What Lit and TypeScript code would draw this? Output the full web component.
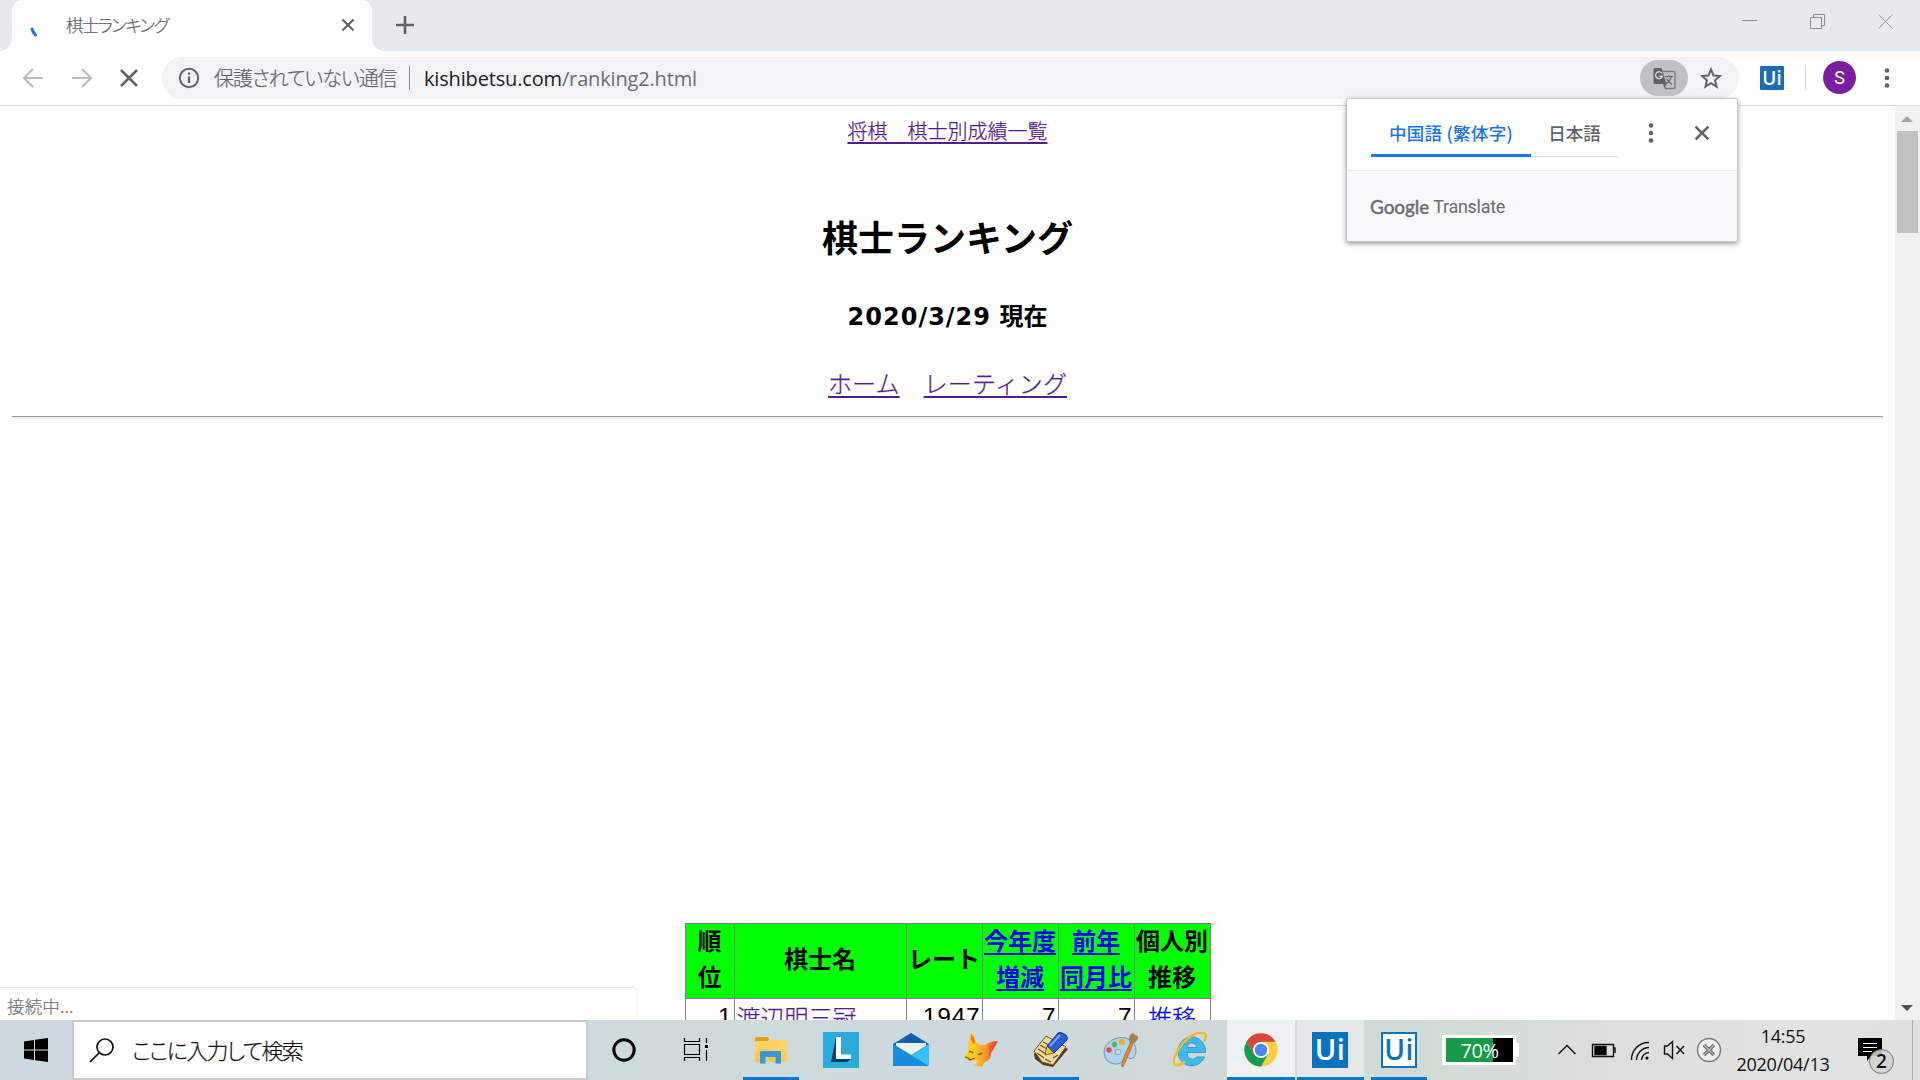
import { LitElement, html, css, svg } from "lit";
import { customElement } from "lit/decorators.js";

const closeGlyph = (w: number, sw: number) => html`
  <svg width=${w} height=${w} viewBox="0 0 20 20" fill="none" stroke="#5f6368" stroke-width=${sw}>
    <path d="M2 2L18 18M18 2L2 18" />
  </svg>`;

const kebab = html`
  <svg width="6" height="24" viewBox="0 0 6 24" fill="#5f6368">
    <circle cx="3" cy="4.500" r="2.300" /><circle cx="3" cy="12" r="2.300" /><circle cx="3" cy="19.500" r="2.300" />
  </svg>`;

@customElement("browser-tabs")
class BrowserTabs extends LitElement {
  static styles = css`
    :host { display: flex; height: 51px; background: #e7eaed; font-family: "Noto Sans CJK JP", sans-serif; }
    .tab { position: relative; display: flex; align-items: center; box-sizing: border-box; width: 360px; margin-left: 12px;
      background: #fff; border-radius: 11px 11px 0 0; padding: 0 17px 0 18px; }
    .tab::before, .tab::after { content: ""; position: absolute; bottom: 0; width: 12px; height: 12px; }
    .tab::before { left: -12px; background: radial-gradient(circle at 0 0, transparent 11.5px, #fff 12px); }
    .tab::after { right: -12px; background: radial-gradient(circle at 100% 0, transparent 11.5px, #fff 12px); }
    .spin { width: 36px; height: 20px; padding-top: 5px; }
    .title { flex: 1; padding-bottom: 2px; font-size: 17.5px; color: #5f6368; font-feature-settings: "palt"; letter-spacing: -1.6px; font-weight: 300; -webkit-text-stroke: .2px #5f6368; white-space: nowrap; }
    .tab > svg { margin-bottom: 1px; }
    .plus { margin: 15px 0 0 23px; }
    .win { margin: 14px 27px 0 auto; display: flex; gap: 53px; }
  `;
  render() {
    return html`
      <div class="tab">
        <div class="spin"><svg width="8" height="10" viewBox="0 0 8 10"><path d="M2 2Q3 5.500 5.500 8" stroke="#1a73e8" stroke-width="3" stroke-linecap="round" fill="none" /></svg></div>
        <div class="title">棋士ランキング</div>
        ${closeGlyph(14, 3)}
      </div>
      <svg class="plus" width="20" height="20" viewBox="0 0 20 20" stroke="#5f6368" stroke-width="2.6"><path d="M10 1V19M1 10H19" /></svg>
      <div class="win">
        <svg width="15" height="16" stroke="#8b8e91"><path d="M0 6.500H15" /></svg>
        <svg width="15" height="16" fill="none" stroke="#8b8e91"><path d="M.5 3.500H11.500V14.500H.5ZM3.500 3V.5H14.500V11.500H12" /></svg>
        <svg width="15" height="16" fill="none" stroke="#9a9da0"><path d="M.5 .5L14.500 14.500M14.500 .5L.5 14.500" /></svg>
      </div>`;
  }
}

@customElement("browser-toolbar")
class BrowserToolbar extends LitElement {
  static styles = css`
    :host { display: flex; align-items: center; box-sizing: border-box; height: 55px; padding-left: 22px; background: #fff;
      border-bottom: 1px solid #dadce0; font-family: "Open Sans", "Noto Sans CJK JP", sans-serif; }
    .nav { display: flex; align-items: center; gap: 26.5px; width: 140px; }
    .omni { display: flex; align-items: center; box-sizing: border-box; width: 1577px; height: 42px; border-radius: 21px; background: #f1f3f4; padding: 0 17px 0 16px; }
    .warn { margin-left: 14px; margin-top: -2px; width: 195px; font: 300 20px "Noto Sans CJK JP", sans-serif; color: #5f6368; font-feature-settings: "palt"; letter-spacing: -1.05px; -webkit-text-stroke: .2px #5f6368; white-space: nowrap; }
    .bar { width: 1px; height: 24px; background: #8c8f93; }
    .url { flex: 1; margin-left: 14px; font-size: 20px; letter-spacing: -.16px; color: #202124; white-space: nowrap; }
    .path { color: #6a6d71; }
    .tr { display: flex; align-items: center; justify-content: center; width: 48px; height: 36px; border-radius: 18px; background: #c1c1c3; margin-right: 12px; }
    .ui { display: flex; align-items: center; justify-content: center; width: 24px; height: 24px; margin-left: 21px; background: #1a6db3; color: #fff; font: 600 19px "Open Sans", sans-serif; border-radius: 1px; }
    .sep { width: 1px; height: 24px; background: #cfd1d4; margin: 0 17px 0 21px; }
    .avatar { display: flex; align-items: center; justify-content: center; width: 33px; height: 33px; border-radius: 50%; background: #7b1fa2; color: #fff; font: 18px Roboto, sans-serif; margin-right: 28px; margin-top: -1px; }
  `;
  render() {
    return html`
      <div class="nav">
        <svg width="22" height="20" viewBox="0 0 22 20" fill="none" stroke="#babcbe" stroke-width="2.2"><path d="M21 10H3M11 1L2 10L11 19" /></svg>
        <svg width="22" height="20" viewBox="0 0 22 20" fill="none" stroke="#babcbe" stroke-width="2.2"><path d="M1 10H19M11 1L20 10L11 19" /></svg>
        ${closeGlyph(20, 2.5)}
      </div>
      <div class="omni">
        <svg width="22" height="22" viewBox="0 0 22 22" fill="none" stroke="#5f6368" stroke-width="2"><circle cx="11" cy="11" r="9.200" /><path d="M11 9.500V16M11 5.500V7.800" stroke-width="2.300" /></svg>
        <div class="warn">保護されていない通信</div>
        <div class="bar"></div>
        <div class="url">kishibetsu.com<span class="path">/ranking2.html</span></div>
        <div class="tr">
          <svg width="23" height="23" viewBox="0 0 23 23">
            <path d="M9.500 4.500H20.500Q22 4.500 22 6V20Q22 21.500 20.500 21.500H12" fill="#c1c1c3" stroke="#7b7d80" stroke-width="1.400" />
            <path d="M2 1H8.500L13.500 17H2Q.5 17 .5 15.500V2.500Q.5 1 2 1Z" fill="#5f6368" /><path d="M10 17H13.500L11.500 21.500Z" fill="#5f6368" />
            <path d="M9 6.500A3.400 3.400 0 1 0 9.300 9.200H6.200" fill="none" stroke="#d5d7d9" stroke-width="1.400" />
            <path d="M12 9.500H20M15.700 8V9.500M18.500 9.500Q17 14 13 17M13.500 11.500Q15.500 15 19 17.500" fill="none" stroke="#5f6368" stroke-width="1.200" />
          </svg>
        </div>
        <svg width="22" height="22" viewBox="0 0 22 22" fill="none" stroke="#5f6368" stroke-width="2"><path d="M11 2.400L13.500 8.500L20 9L15 13.300L16.600 19.700L11 16.200L5.400 19.700L7 13.300L2 9L8.500 8.500Z" /></svg>
      </div>
      <div class="ui">Ui</div>
      <div class="sep"></div>
      <div class="avatar">S</div>
      ${kebab}`;
  }
}

@customElement("translate-popup")
class TranslatePopup extends LitElement {
  static styles = css`
    :host { display: block; width: 390px; height: 142px; background: #fff; border: 1px solid #c4c6c8; border-radius: 3px;
      box-shadow: 0 2px 5px rgba(0,0,0,.38); overflow: hidden; font-family: "Noto Sans CJK JP", sans-serif; }
    .top { display: flex; height: 72px; border-bottom: 1px solid #eceef0; box-sizing: border-box; padding-left: 24px; }
    .lang { box-sizing: border-box; height: 58px; padding-top: 21px; font-size: 17.5px; line-height: 25px; font-weight: 500; text-align: center; white-space: nowrap; color: #5f6368; border-bottom: 1px solid #dadce0; width: 87px; }
    .on { width: 160px; color: #1a73e8; border-bottom: 3px solid #1a73e8; letter-spacing: .3px; }
    .k { margin: 22px 40px 0 30px; }
    .x { margin-top: 23px; }
    .foot { height: 70px; background: #f8f9fb; display: flex; align-items: center; padding-left: 23px; font: 18px Roboto, sans-serif; color: #6a6d71; letter-spacing: -.3px; gap: 4px; }
    .g { font: 500 19px Lato, sans-serif; letter-spacing: -.1px; -webkit-text-stroke: .3px #6a6d71; }
  `;
  render() {
    return html`
      <div class="top">
        <div class="lang on">中国語 (繁体字)</div>
        <div class="lang">日本語</div>
        <div class="k">${kebab}</div>
        <div class="x">${closeGlyph(16, 3.2)}</div>
      </div>
      <div class="foot"><span class="g">Google</span><span>Translate</span></div>`;
  }
}

@customElement("ranking-page")
class RankingPage extends LitElement {
  static styles = css`
    :host { display: flex; height: 914px; overflow: hidden; background: #fff; font-family: "Noto Sans CJK JP", sans-serif; color: #000; }
    .page { flex: 1; padding: 0 12px; display: flex; flex-direction: column; align-items: center; }
    .link { color: #551a8b; text-decoration: underline; font-weight: 300; -webkit-text-stroke: .25px; text-underline-offset: 3px; text-decoration-thickness: 2px; text-decoration-skip-ink: none; }
    .all { margin-top: 10px; font-size: 20px; line-height: 30px; }
    h1 { margin: 63px 0 0; font-size: 36px; line-height: 54px; font-weight: 700; }
    h2 { margin: 36px 0 0; font: 700 24px/36px "DejaVu Sans", "Noto Sans CJK JP", sans-serif; }
    .date { letter-spacing: 1px; }
    .links { margin-top: 30px; font-size: 24px; line-height: 36px; display: flex; gap: 24px; letter-spacing: .15px; }
    .rule { width: 100%; box-sizing: border-box; height: 3px; margin-top: 15px; border-top: 1px solid #9a9a9a; border-bottom: 2px solid #eee; }
    table { margin-top: 504px; border-collapse: collapse; table-layout: fixed; width: 526px; font-size: 24px; line-height: 36px; }
    th, td { border: 1px solid #808080; padding: 0 2px; white-space: nowrap; }
    th { background: #0f0; height: 74px; padding: 0; font-weight: 700; }
    .head { margin: -3.5px 0 3.5px; }
    th a { color: #00e; text-decoration: underline; text-decoration-skip-ink: none; text-underline-offset: 3px; text-decoration-thickness: 2px; }
    td { height: 36px; padding-bottom: 2px; line-height: 34px; font-weight: 300; -webkit-text-stroke: .25px; }
    .n { text-align: right; font: 24.5px/34px "Liberation Sans", sans-serif; letter-spacing: .8px; -webkit-text-stroke: 0; padding-right: 1px; }
    .p { color: #551a8b; }
    .c { text-align: center; color: #00e; }
    .scroll { width: 25px; box-sizing: border-box; background: #f1f1f1; display: flex; flex-direction: column; align-items: center; padding: 10px 3px 9px 2px; }
    .thumb { width: 21px; height: 102px; background: #c1c1c1; margin-top: 9px; margin-bottom: auto; }
  `;
  render() {
    const widths = [49, 172, 76, 76, 76, 76];
    const th = (body: unknown) => html`<th><div class="head">${body}</div></th>`;
    return html`
      <div class="page">
        <a class="link all">将棋　棋士別成績一覧</a>
        <h1>棋士ランキング</h1>
        <h2><span class="date">2020/3/29</span> 現在</h2>
        <div class="links"><a class="link">ホーム</a><a class="link">レーティング</a></div>
        <div class="rule"></div>
        <table>
          <colgroup>${widths.map((w) => html`<col style="width:${w}px" />`)}</colgroup>
          <tr>
            ${th(html`順<br />位`)}${th("棋士名")}${th("レート")}
            ${th(html`<a>今年度<br />増減</a>`)}${th(html`<a>前年<br />同月比</a>`)}${th(html`個人別<br />推移`)}
          </tr>
          <tr><td class="n">1</td><td class="p">渡辺明三冠</td><td class="n">1947</td><td class="n">7</td><td class="n">7</td><td class="c">推移</td></tr>
        </table>
      </div>
      <div class="scroll">
        <svg width="12" height="6"><path d="M6 0L12 6H0Z" fill="#a3a3a3" /></svg>
        <div class="thumb"></div>
        <svg width="12" height="6"><path d="M6 6L12 0H0Z" fill="#505050" /></svg>
      </div>`;
  }
}

const icons: Record<string, unknown> = {
  cortana: svg`<circle cx="18" cy="18" r="10.200" fill="none" stroke="#000" stroke-width="3" />`,
  taskview: svg`<path d="M6.500 6V9.500H21.500V6M6.500 29V25.500H21.500V29M6.500 12.500H21.500V22.500H6.500ZM28.500 6V11M28.500 18V29" fill="none" stroke="#000" stroke-width="1.200" /><path d="M27 13H30V16H27Z" />`,
  folder: svg`<path d="M2 7Q2 5 4 5H14L16.500 8H32Q34 8 34 10V28Q34 30 32 30H4Q2 30 2 28Z" fill="#ffd366" /><path d="M2 9V6.500Q2 5 4 5H14.500L16.500 7L15 9Z" fill="#e3a10b" /><path d="M2 20H34V28Q34 30 32 30H4Q2 30 2 28Z" fill="#ffc94d" /><path d="M7 31.500V20Q7 19 8.500 19H26.500Q28 19 28 20V31.500H22.500V25H12.500V31.500Z" fill="#3b95dc" />`,
  letterL: svg`<rect width="36" height="36" fill="#29acdb" /><path d="M13 5L8 30H24L28 27H13Z" fill="#063e75" /><path d="M13 5H18V22.500H28V27H13Z" fill="#fff" />`,
  mail: svg`<path d="M0 12L18 1L36 12V17H0Z" fill="#0a5fb0" /><path d="M3 11H33V23H3Z" fill="#f2f2f2" /><path d="M0 12L18 23L36 12V34H0Z" fill="#27b4ee" /><path d="M0 12L36 34H0Z" fill="#168cdb" /><path d="M18 23L36 12V34Z" fill="#35c0f5" />`,
  fox: svg`<defs><linearGradient id="fx"><stop offset=".3" stop-color="#ffc91f" /><stop offset=".65" stop-color="#f79330" /><stop offset="1" stop-color="#d94f24" /></linearGradient></defs><path d="M8 0Q12 4 13.500 11Q18 14 22 13Q27 9 35 9Q31 16 28 21Q29 26 24 29Q20 31 19 35L11 33Q15 30 14 28Q8 30 3 27L1 24L5 20Q5 8 8 0Z" fill="url(#fx)" /><path d="M8 2Q12 5 12 12Q9 11 8 8ZM25 14Q31 12 34 10Q31 18 25 26Q28 19 25 14Z" fill="#e0522d" opacity=".65" /><path d="M6 20Q8 19 10 21M15 22Q17 23 19 21M2 25L5 26L7 28L12 26" fill="none" stroke="#8a4a0c" stroke-width="1.100" />`,
  notes: svg`<path d="M1 22L14 6L35 17L20 35L10 33L2 27Z" fill="#4f3a18" /><path d="M1 19L13 4L33 15L20 33L9 30Z" fill="#efdba2" stroke="#6e5425" /><path d="M5 17L13 22M7 13L14 17M10 10L16 13M4 21L11 26M12 27L18 30M20 26L25 23" stroke="#6e5425" stroke-width="1.300" /><path d="M14 14L25 1Q27 0 29 1L33 3Q35 5 34 8L21 21Z" fill="#285fdc" stroke="#173477" /><path d="M17 14L27 3" stroke="#7aa4ff" stroke-width="2" /><path d="M14 14L21 21L12 23Z" fill="#f5c83b" stroke="#483915" stroke-width=".7" />`,
  paint: svg`<path d="M2 25Q-1 17 5 11Q13 4 23 6Q34 10 33 20Q31 29 26 26Q21 23 20 29Q15 34 8 31Q3 29 2 25Z" fill="#add5ed" stroke="#7094b0" /><ellipse cx="15" cy="20" rx="3" ry="2.500" fill="#d7dfdd" stroke="#7aa0b8" /><circle cx="6" cy="18" r="2.700" fill="#e24c3d" /><circle cx="11.500" cy="12.500" r="2.700" fill="#58b850" /><circle cx="19" cy="10" r="3" fill="#f2a932" /><path d="M18.500 34Q19 28 27 11L30 12Q24 27 20 35Z" fill="#e58236" stroke="#b2602a" stroke-width=".6" /><path d="M26.500 11Q25 5 28 2Q30 0 32 3L35 4Q36 8 30 12Z" fill="#aa7b55" />`,
  ie: svg`<path d="M32.500 20.500V18A13.800 14.500 0 1 0 31.500 25H23.500Q21 28.500 17 26.500Q14 25 14 20.500ZM14 15.500Q15 11 19 11Q23.500 11.500 24 15.500Z" fill="#3fb8ef" stroke="#1f91cf" stroke-width=".8" fill-rule="evenodd" /><path d="M31 10Q35 1 30 1Q22-1 10 11Q-3 28 2 33Q5 34 12 30" fill="none" stroke="#f2bd22" stroke-width="2.600" />`,
  chrome: svg`<circle cx="18" cy="18" r="16.600" fill="#fcce41" /><path d="M3.600 9.700A16.600 16.600 0 0 1 32.400 9.700H18L10.800 22Z" fill="#d9463b" /><path d="M3.600 9.700A16.600 16.600 0 0 0 18 34.600L25.200 22H10.800Z" fill="#169a57" /><circle cx="18" cy="18" r="8" fill="#fff" /><circle cx="18" cy="18" r="6.200" fill="#4a87ed" />`,
};

@customElement("task-bar")
class TaskBar extends LitElement {
  static styles = css`
    :host { display: flex; height: 60px; overflow: hidden; background: linear-gradient(90deg, #cdd9e1 0, #cddade 590px, #d0dad8 660px, #cdd9df 920px, #d0d9da 1200px, #d2dcd5 1450px, #dddfdc 1620px, #e1e2e2 1800px, #e0e0e1); font-family: "Open Sans", "Noto Sans CJK JP", sans-serif; color: #111; }
    .start { width: 72px; display: flex; align-items: center; justify-content: center; }
    .search { box-sizing: border-box; width: 516px; border: 2px solid #c9cacb; background: #fff; display: flex; align-items: center; padding-left: 15px; gap: 18px; font: 300 22px "Noto Sans CJK JP", sans-serif; font-feature-settings: "palt"; letter-spacing: -1.7px; color: #111; }
    .search span { padding-bottom: 2px; -webkit-text-stroke: .2px #111; }
    .apps { display: flex; width: 846px; }
    .app { position: relative; flex: none; box-sizing: border-box; width: 70px; display: flex; justify-content: center; padding-top: 12px; }
    .wide { width: 72px; }
    .gap { margin-right: 4px; }
    .run::after { content: ""; position: absolute; bottom: 0; left: 7px; right: 7px; height: 3px; background: #0078d7; }
    .active { width: 68px; background: #eef1f1; margin-right: 2px; margin-left: 1px; }
    .shade { width: 67px; background: #e4e8e8; padding-right: 1px; }
    .active::after, .shade::after { left: 0; right: 0; }
    .uisq { box-sizing: border-box; width: 36px; height: 36px; background: #0873bf; color: #fff; font: 600 29px/34px "Open Sans", sans-serif; text-align: center; letter-spacing: .5px; }
    .inv { background: #fff; color: #0873bf; border: 2px solid #0873bf; line-height: 31px; font-size: 28px; }
    .power { display: flex; align-items: center; height: 30px; margin-top: 15px; margin-left: 8px; }
    .cell { box-sizing: border-box; width: 74px; height: 30px; border: 3px solid #fff; border-left-width: 4px; background: linear-gradient(90deg, #179b49 47px, #000 47px); color: #fff; font-size: 20px; line-height: 26px; text-align: center; letter-spacing: -.5px; }
    .nub { width: 3px; height: 14px; background: #fff; }
    .tray { display: flex; align-items: center; margin-left: 38px; }
    .clock { width: 120px; margin-left: -2px; text-align: center; font-size: 18px; line-height: 28px; letter-spacing: -.25px; padding-bottom: 1px; }
    .note { position: relative; width: 40px; height: 40px; margin-left: 15px; margin-top: 15px; }
    .count { position: absolute; left: 11px; top: 11px; box-sizing: border-box; width: 25px; height: 25px; border: 1px solid #777; border-radius: 50%; background: rgba(210,210,210,.88); text-align: center; font-size: 19px; line-height: 23px; font-weight: 600; }
    .edge { width: 1px; background: #aaa; margin-left: auto; margin-right: 7px; }
  `;
  icon(name: string, cls = "") {
    return html`<div class="app ${cls}"><svg width="36" height="36" viewBox="0 0 36 36">${icons[name]}</svg></div>`;
  }
  render() {
    return html`
      <div class="start"><svg width="24" height="24" viewBox="0 0 24 24"><path d="M0 3.400L10 2V11.500H0ZM11 1.800L24 0V11.500H11ZM0 12.500H10V22L0 20.600ZM11 12.500H24V24L11 22.200Z" /></svg></div>
      <div class="search">
        <svg width="25" height="25" viewBox="0 0 25 25" fill="none" stroke="#111" stroke-width="1.700"><circle cx="16" cy="9" r="8" /><path d="M10.500 14.500L1 24" /></svg>
        <span>ここに入力して検索</span>
      </div>
      <div class="apps">
        ${this.icon("cortana", "wide")}${this.icon("taskview", "wide gap")}${this.icon("folder", "run")}${this.icon("letterL")}
        ${this.icon("mail")}${this.icon("fox")}${this.icon("notes", "run")}${this.icon("paint")}${this.icon("ie")}
        ${this.icon("chrome", "run active")}
        <div class="app run shade"><div class="uisq">Ui</div></div>
        <div class="app run"><div class="uisq inv">Ui</div></div>
      </div>
      <div class="power"><div class="cell">70%</div><div class="nub"></div></div>
      <div class="tray">
        <svg width="168" height="30" viewBox="1557 1035 168 30" fill="none" stroke="#111" stroke-width="1.400">
          <path d="M1558.500 1054L1567 1045.500L1575.500 1054" />
          <path d="M1592.500 1044.500H1613.500V1056.500H1592.500Z" /><path d="M1595 1046.500H1606V1054.500H1595Z" fill="#000" /><path d="M1614 1048H1615V1053" />
          <path d="M1631.500 1060A17 17 0 0 1 1649 1042.500M1636.500 1060A13 13 0 0 1 1649 1047.500M1641.500 1060A8 8 0 0 1 1649 1052.500" /><circle cx="1647" cy="1058" r="1.600" fill="#000" stroke="none" />
          <path d="M1664.500 1046H1667.500L1672.500 1041.500V1058.500L1667.500 1054H1664.500ZM1676.500 1046L1684 1054M1684 1046L1676.500 1054" />
          <circle cx="1709" cy="1050" r="11.500" fill="#efefef" stroke="#777" /><path d="M1704 1045L1714 1055M1714 1045L1704 1055" stroke="#666" stroke-width="3.600" /><path d="M1704 1045L1714 1055M1714 1045L1704 1055" stroke="#bbb" stroke-width="1.200" />
        </svg>
        <div class="clock">14:55<br />2020/04/13</div>
        <div class="note">
          <svg width="24" height="24" viewBox="0 0 24 24"><path d="M0 0H24V18H13L9 23V18H0Z" /><path d="M5 5.500H19M5 9.500H19M5 13.500H14" stroke="#fff" stroke-width="1.200" /></svg>
          <div class="count">2</div>
        </div>
      </div>
      <div class="edge"></div>`;
  }
}

@customElement("app-root")
class AppRoot extends LitElement {
  static styles = css`
    :host { display: block; position: relative; width: 1920px; height: 1080px; overflow: hidden; background: #fff; }
    .popup { position: absolute; left: 1346px; top: 98px; }
    .status { position: absolute; left: 0; top: 987px; box-sizing: border-box; width: 638px; height: 33px; background: #fff;
      border: solid #dedfe1; border-width: 1px 1px 0 0; border-right-color: #f4f4f4; border-radius: 0 5px 0 0; padding: 5px 0 0 7px;
      font: 300 17.500px/25px "Noto Sans CJK JP", sans-serif; letter-spacing: .15px; color: #6c6f73; -webkit-text-stroke: .2px; white-space: nowrap; }
  `;
  render() {
    return html`
      <browser-tabs></browser-tabs>
      <browser-toolbar></browser-toolbar>
      <ranking-page></ranking-page>
      <task-bar></task-bar>
      <translate-popup class="popup"></translate-popup>
      <div class="status">接続中...</div>`;
  }
}
